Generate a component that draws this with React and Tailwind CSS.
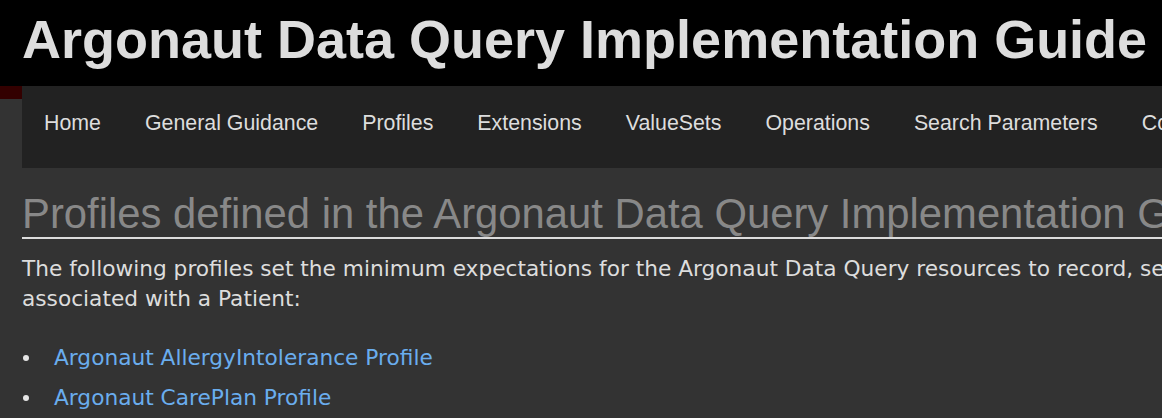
const navItems = [
  "Home",
  "General Guidance",
  "Profiles",
  "Extensions",
  "ValueSets",
  "Operations",
  "Search Parameters",
  "Conformance",
];

const profiles = [
  "Argonaut AllergyIntolerance Profile",
  "Argonaut CarePlan Profile",
  "Argonaut CareTeam Profile",
];

function App() {
  return (
    <div className="h-[418px] w-[1162px] overflow-hidden bg-[#333] font-['Liberation_Sans',Arial,sans-serif]">
      <div className="h-[86px] bg-black pl-[22px] pt-[8px]">
        <h1 className="whitespace-nowrap text-[54px] font-bold leading-[62px] text-[#ddd]">
          Argonaut Data Query Implementation Guide
        </h1>
      </div>

      <div className="flex">
        <div className="h-[13px] w-[22px] shrink-0 bg-[#300]" />
        <nav className="flex h-[82px] flex-1 items-start overflow-hidden whitespace-nowrap bg-[#222] pl-[22px] pt-[23px]">
          {navItems.map((item) => (
            <a key={item} className="mr-[44px] text-[21.35px] leading-[28px] text-[#ddd]">
              {item}
            </a>
          ))}
        </nav>
      </div>

      <div className="pl-[22px] pt-[23px]">
        <h2 className="whitespace-nowrap border-b-2 border-[#ddd] pb-[1px] text-[41.8px] leading-[45px] text-[#888]">
          Profiles defined in the Argonaut Data Query Implementation Guide
        </h2>
        <p className="mt-[15px] whitespace-nowrap font-['DejaVu_Sans',Verdana,sans-serif] text-[21.7px] leading-[30px] text-[#ddd]">
          The following profiles set the minimum expectations for the Argonaut Data Query resources to record, search and fetch
          <br />
          associated with a Patient:
        </p>
        <ul className="mt-[24px] font-['DejaVu_Sans',Verdana,sans-serif] text-[21.7px] leading-[40px] text-[#6aadee]">
          {profiles.map((p) => (
            <li key={p} className="flex items-center">
              <span className="ml-[1px] mr-[25px] h-[6px] w-[6px] rounded-full bg-[#e6e6e6]" />
              <a>{p}</a>
            </li>
          ))}
        </ul>
      </div>
    </div>
  );
}

export default App;
